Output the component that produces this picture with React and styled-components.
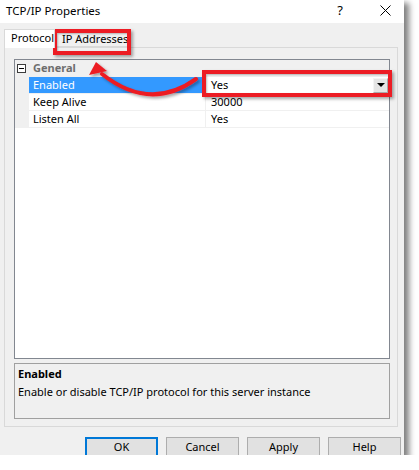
import React from "react";
import styled, { createGlobalStyle } from "styled-components";

const GlobalStyle = createGlobalStyle`
  html, body {
    margin: 0;
    padding: 0;
    background: #ffffff;
  }
  body {
    font-family: "Noto Sans", "Segoe UI", sans-serif;
    font-size: 11px;
    color: #000000;
  }
`;

const Dialog = styled.div`
  position: relative;
  width: 404px;
  height: 455px;
  background: #f0f0f0;
  box-shadow: 4px 4px 6px 1px rgba(0, 0, 0, 0.5);
  display: flex;
  flex-direction: column;
  overflow: hidden;
`;

const TitleBar = styled.div`
  height: 23px;
  flex: none;
  background: #ffffff;
  display: flex;
  align-items: center;
  padding-left: 6px;
  padding-right: 13px;
  box-sizing: border-box;
`;

const Title = styled.span`
  flex: 1;
  font-size: 11.5px;
  line-height: 16px;
  margin-top: -2px;
`;

const TitleActions = styled.div`
  display: flex;
  align-items: center;
  gap: 37px;
  margin-top: -3px;
`;

const HelpMark = styled.span`
  font-size: 13px;
  line-height: 16px;
`;

const Body = styled.div`
  padding: 6px 0 0 4px;
  display: flex;
  flex-direction: column;
`;

const TabRow = styled.div`
  display: flex;
  align-items: flex-end;
  height: 18px;
`;

const Tab = styled.div`
  position: relative;
  z-index: ${(p) => (p.$active ? 1 : 0)};
  box-sizing: border-box;
  width: ${(p) => p.$width}px;
  height: ${(p) => (p.$active ? "19px" : "16px")};
  margin-bottom: ${(p) => (p.$active ? "-1px" : "0")};
  padding-left: ${(p) => (p.$active ? "6px" : "7px")};
  border: 1px solid #d9d9d9;
  border-bottom: ${(p) => (p.$active ? "none" : "1px solid #d9d9d9")};
  border-left: ${(p) => (p.$active ? "1px solid #d9d9d9" : "none")};
  background: ${(p) => (p.$active ? "#ffffff" : "#f0f0f0")};
  font-size: 11px;
  line-height: ${(p) => (p.$active ? "16px" : "14px")};
  white-space: nowrap;
`;

const Panel = styled.div`
  width: 394px;
  height: 380px;
  box-sizing: border-box;
  border: 1px solid #d9d9d9;
  padding: 11px 7px 7px 9px;
  display: flex;
  flex-direction: column;
  gap: 4px;
`;

const Grid = styled.div`
  height: 300px;
  flex: none;
  box-sizing: border-box;
  border: 1px solid #828790;
  background: #ffffff;
`;

const Row = styled.div`
  display: grid;
  grid-template-columns: 14px 176px 1fr;
  height: 17px;
  box-sizing: border-box;
  border-bottom: 1px solid #f0f0f0;
  background: ${(p) => (p.$category ? "#f0f0f0" : "#ffffff")};
`;

const Gutter = styled.div`
  background: #f0f0f0;
  display: flex;
  align-items: center;
  padding-left: 2px;
`;

const Expander = styled.div`
  width: 9px;
  height: 9px;
  box-sizing: border-box;
  border: 1px solid #3c3c3c;
  display: flex;
  align-items: center;
  justify-content: center;
  background: #ffffff;
  &::after {
    content: "";
    width: 5px;
    height: 1px;
    background: #000000;
  }
`;

const Label = styled.div`
  padding-left: 4px;
  line-height: 16px;
  white-space: nowrap;
  font-weight: ${(p) => (p.$category ? 700 : 400)};
  color: ${(p) => (p.$category ? "#6d6d6d" : p.$selected ? "#ffffff" : "#000000")};
  background: ${(p) => (p.$selected ? "#3399ff" : "transparent")};
`;

const CategoryLabel = styled(Label)`
  grid-column: 2 / 4;
`;

const Value = styled.div`
  border-left: 1px solid #f0f0f0;
  padding-left: 5px;
  line-height: 16px;
  display: flex;
  align-items: center;
  justify-content: space-between;
`;

const DropButton = styled.div`
  width: 15px;
  height: 15px;
  box-sizing: border-box;
  margin-right: 1px;
  background: #e5e5e5;
  border: 1px solid #adadad;
  border-top-color: #f4f4f4;
  border-left-color: #f4f4f4;
  display: flex;
  align-items: center;
  justify-content: center;
  &::after {
    content: "";
    border-left: 4px solid transparent;
    border-right: 4px solid transparent;
    border-top: 4px solid #000000;
  }
`;

const Description = styled.div`
  height: 56px;
  flex: none;
  box-sizing: border-box;
  border: 1px solid #a0a0a0;
  padding: 1px 3px;
  line-height: 18px;
`;

const DescTitle = styled.div`
  font-weight: 700;
`;

const ButtonRow = styled.div`
  display: flex;
  justify-content: flex-end;
  gap: 8px;
  padding-right: 3px;
  margin-top: 10px;
`;

const Button = styled.button`
  width: 73px;
  height: 23px;
  flex: none;
  box-sizing: border-box;
  background: #e1e1e1;
  border: ${(p) => (p.$primary ? "2px solid #0078d7" : "1px solid #adadad")};
  font-family: inherit;
  font-size: 11px;
  line-height: 14px;
  color: #000000;
  padding: 0 0 3px 0;
`;

const Highlight = styled.div`
  position: absolute;
  left: ${(p) => p.$x}px;
  top: ${(p) => p.$y}px;
  width: ${(p) => p.$w}px;
  height: ${(p) => p.$h}px;
  box-sizing: border-box;
  border: 4px solid #ec1c24;
  box-shadow: 2px 2px 3px rgba(0, 0, 0, 0.35), inset 1px 1px 2px rgba(0, 0, 0, 0.25);
  pointer-events: none;
`;

const ArrowLayer = styled.svg`
  position: absolute;
  left: 0;
  top: 0;
  pointer-events: none;
  overflow: visible;
`;

const properties = [
  { name: "Enabled", value: "Yes", selected: true },
  { name: "Keep Alive", value: "30000" },
  { name: "Listen All", value: "Yes" },
];

const CloseIcon = () => (
  <svg width="11" height="11" viewBox="0 0 11 11">
    <path d="M0.5 0.5 L10.5 10.5 M10.5 0.5 L0.5 10.5" stroke="#000" strokeWidth="1" fill="none" />
  </svg>
);

const App = () => {
  return (
    <>
      <GlobalStyle />
      <Dialog>
        <TitleBar>
          <Title>TCP/IP Properties</Title>
          <TitleActions>
            <HelpMark>?</HelpMark>
            <CloseIcon />
          </TitleActions>
        </TitleBar>
        <Body>
          <TabRow>
            <Tab $active $width={51}>Protocol</Tab>
            <Tab $width={76}>IP Addresses</Tab>
          </TabRow>
          <Panel>
            <Grid>
              <Row $category>
                <Gutter>
                  <Expander />
                </Gutter>
                <CategoryLabel $category>General</CategoryLabel>
              </Row>
              {properties.map((p) => (
                <Row key={p.name}>
                  <Gutter />
                  <Label $selected={p.selected}>{p.name}</Label>
                  <Value>
                    <span>{p.value}</span>
                    {p.selected && <DropButton />}
                  </Value>
                </Row>
              ))}
            </Grid>
            <Description>
              <DescTitle>Enabled</DescTitle>
              <div>Enable or disable TCP/IP protocol for this server instance</div>
            </Description>
          </Panel>
          <ButtonRow>
            <Button $primary>OK</Button>
            <Button>Cancel</Button>
            <Button>Apply</Button>
            <Button>Help</Button>
          </ButtonRow>
        </Body>

        <Highlight $x={53} $y={29} $w={78} $h={26} />
        <Highlight $x={202} $y={70} $w={190} $h={27} />
        <ArrowLayer width="404" height="140" viewBox="0 0 404 140">
          <defs>
            <filter id="arrowShadow" x="-20%" y="-20%" width="140%" height="140%">
              <feDropShadow dx="2" dy="2" stdDeviation="1.5" floodColor="#000" floodOpacity="0.35" />
            </filter>
          </defs>
          <g filter="url(#arrowShadow)">
            <path
              d="M196 79 Q150 112 102 74"
              stroke="#ec1c24"
              strokeWidth="4"
              fill="none"
              strokeLinecap="round"
            />
            <path d="M96 62 L89 75 L107 71 Z" fill="#ec1c24" />
          </g>
        </ArrowLayer>
      </Dialog>
    </>
  );
};

export default App;
